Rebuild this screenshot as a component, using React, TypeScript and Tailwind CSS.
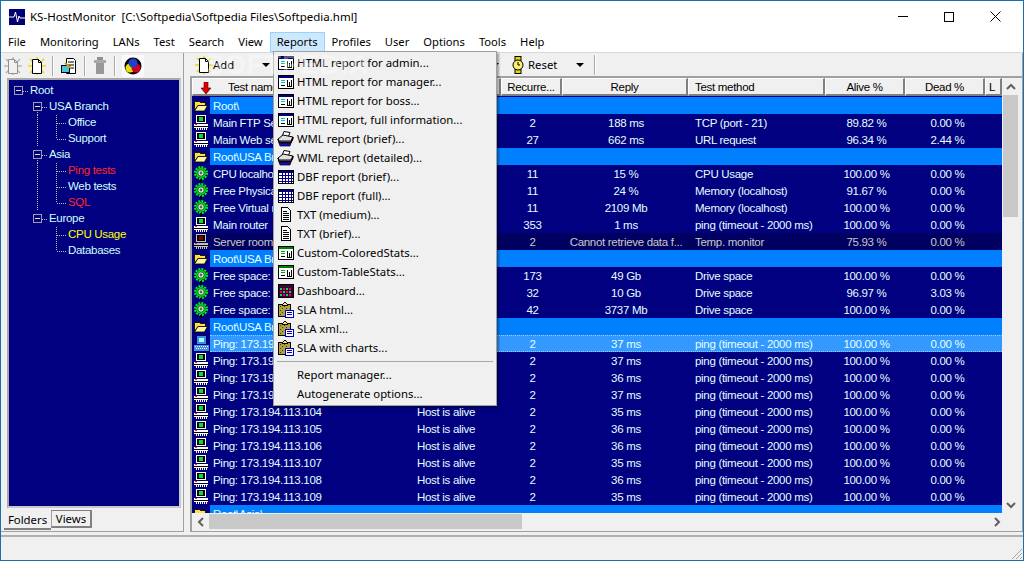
import React from 'react';

const UI = "font-['Noto_Sans',sans-serif] text-[11.35px]";
const GRID = "font-['Liberation_Sans',sans-serif] text-[11.5px] tracking-[-0.3px]";

type RowKind = 'folder' | 'pc' | 'gear' | 'bad' | 'sel';

interface Row {
  kind: RowKind;
  name: string;
  status?: string;
  rec?: string;
  reply?: string;
  method?: string;
  alive?: string;
  dead?: string;
}

const PING = 'ping (timeout - 2000 ms)';

const ping = (n: number, ms: number, kind: RowKind = 'pc'): Row => ({
  kind,
  name: `Ping: 173.194.113.${n}`,
  status: 'Host is alive',
  rec: '2',
  reply: `${ms} ms`,
  method: PING,
  alive: '100.00 %',
  dead: '0.00 %',
});

const rows: Row[] = [
  { kind: 'folder', name: 'Root\\' },
  { kind: 'pc', name: 'Main FTP Server', status: 'Host is alive', rec: '2', reply: '188 ms', method: 'TCP (port - 21)', alive: '89.82 %', dead: '0.00 %' },
  { kind: 'pc', name: 'Main Web server', status: 'Host is alive', rec: '27', reply: '662 ms', method: 'URL request', alive: '96.34 %', dead: '2.44 %' },
  { kind: 'folder', name: 'Root\\USA Branch\\' },
  { kind: 'gear', name: 'CPU localhost', status: 'Normal', rec: '11', reply: '15 %', method: 'CPU Usage', alive: '100.00 %', dead: '0.00 %' },
  { kind: 'gear', name: 'Free Physical memory', status: 'Normal', rec: '11', reply: '24 %', method: 'Memory (localhost)', alive: '91.67 %', dead: '0.00 %' },
  { kind: 'gear', name: 'Free Virtual memory', status: 'Normal', rec: '11', reply: '2109 Mb', method: 'Memory (localhost)', alive: '100.00 %', dead: '0.00 %' },
  { kind: 'pc', name: 'Main router', status: 'Host is alive', rec: '353', reply: '1 ms', method: PING, alive: '100.00 %', dead: '0.00 %' },
  { kind: 'bad', name: 'Server room: temperature', status: 'Unknown', rec: '2', reply: 'Cannot retrieve data f...', method: 'Temp. monitor', alive: '75.93 %', dead: '0.00 %' },
  { kind: 'folder', name: 'Root\\USA Branch\\Office' },
  { kind: 'gear', name: 'Free space: C', status: 'Normal', rec: '173', reply: '49 Gb', method: 'Drive space', alive: '100.00 %', dead: '0.00 %' },
  { kind: 'gear', name: 'Free space: D', status: 'Normal', rec: '32', reply: '10 Gb', method: 'Drive space', alive: '96.97 %', dead: '3.03 %' },
  { kind: 'gear', name: 'Free space: E', status: 'Normal', rec: '42', reply: '3737 Mb', method: 'Drive space', alive: '100.00 %', dead: '0.00 %' },
  { kind: 'folder', name: 'Root\\USA Branch\\Support' },
  ping(100, 37, 'sel'),
  ping(101, 37),
  ping(102, 36),
  ping(103, 37),
  ping(104, 35),
  ping(105, 36),
  ping(106, 36),
  ping(107, 35),
  ping(108, 36),
  ping(109, 35),
  { kind: 'folder', name: 'Root\\Asia\\' },
];

const FolderIcon = () => (
  <svg width="14" height="12" viewBox="0 0 14 12">
    <path d="M0.5 1.5h5l1 1h5v3H4l-3.5 5z" fill="#ffe040" stroke="#000" strokeWidth="0.8" />
    <path d="M4 5.5h9.5l-3 5.5H0.5z" fill="#fff8a0" stroke="#000" strokeWidth="0.8" />
  </svg>
);

const PcIcon = ({ screen = '#00e040', body = '#ffffff' }: { screen?: string; body?: string }) => (
  <svg width="14" height="15" viewBox="0 0 14 15" shapeRendering="crispEdges">
    <rect x="2" y="0" width="10" height="8" fill={body} />
    <rect x="3" y="1" width="8" height="6" fill="#000" />
    <rect x="5" y="2" width="4" height="4" fill={screen} />
    <rect x="5" y="8" width="4" height="1" fill="#000" />
    <rect x="0" y="9" width="14" height="2" fill={body} />
    <rect x="1" y="9" width="2" height="1" fill="#ff2020" />
    <rect x="0" y="11" width="14" height="1" fill="#000" />
    <rect x="0" y="12" width="14" height="1" fill={body} />
    <path d="M2 13h1v2H2zM4 13h1v2H4zM6 13h1v2H6zM8 13h1v2H8zM10 13h1v2h-1zM12 13h1v2h-1z" fill={body} />
  </svg>
);

const SelIcon = () => (
  <svg width="15" height="16" viewBox="0 0 15 16" shapeRendering="crispEdges">
    <rect x="3" y="0" width="9" height="8" fill="#3f8fe0" />
    <rect x="5" y="2" width="5" height="4" fill="#a0ffff" />
    <rect x="0" y="9" width="15" height="6" fill="#3f8fe0" />
    <path d="M1 10h1v1H1zM3 10h1v1H3zM5 10h1v1H5zM7 10h1v1H7zM9 10h1v1H9zM11 10h1v1h-1zM13 10h1v1h-1zM2 12h1v1H2zM4 12h1v1H4zM6 12h1v1H6zM8 12h1v1H8zM10 12h1v1h-1zM12 12h1v1h-1z" fill="#ffffff" />
  </svg>
);

const GearIcon = () => (
  <svg width="16" height="16" viewBox="0 0 16 16">
    <circle cx="8" cy="7" r="6" fill="none" stroke="#00f010" strokeWidth="2" strokeDasharray="2 1.1" />
    <circle cx="8" cy="7" r="5" fill="#00e010" />
    <circle cx="8" cy="7" r="3.2" fill="#e8e8e8" stroke="#004000" strokeWidth="0.8" />
    <circle cx="8" cy="7" r="1.4" fill="#308030" />
    <rect x="7" y="13" width="2" height="3" fill="#000" />
  </svg>
);

const Win = ({ bar = '#000080', body = '#fff', a = '#00c0c0', b = '#000' }: { bar?: string; body?: string; a?: string; b?: string }) => (
  <svg width="16" height="14" viewBox="0 0 16 14" shapeRendering="crispEdges">
    <rect x="0.5" y="0.5" width="15" height="13" fill={body} stroke="#000" />
    <rect x="1" y="1" width="14" height="2" fill={bar} />
    <rect x="3" y="5" width="4" height="1" fill={a} />
    <rect x="3" y="7" width="4" height="1" fill={a} />
    <rect x="3" y="10" width="4" height="1" fill={b} />
    <path d="M9 5h1v6H9zM11 7h1v4h-1zM13 5h1v6h-1zM9 11h5v1H9z" fill={b} />
  </svg>
);

const TableIcon = () => (
  <svg width="16" height="14" viewBox="0 0 16 14" shapeRendering="crispEdges">
    <rect x="0.5" y="0.5" width="15" height="13" fill="#fff" stroke="#000" />
    <rect x="1" y="1" width="14" height="2" fill="#000080" />
    <path d="M1 5h14v1H1zM1 8h14v1H1zM1 11h14v1H1zM4 3h1v10H4zM7 3h1v10H7zM10 3h1v10h-1zM13 3h1v10h-1z" fill="#000080" />
  </svg>
);

const DocIcon = () => (
  <svg width="12" height="15" viewBox="0 0 12 15" shapeRendering="crispEdges">
    <path d="M1.5 0.5h6l3 3v11h-9z" fill="#fff" stroke="#000" />
    <path d="M3 4h4v1H3zM3 6h6v1H3zM3 8h6v1H3zM3 10h6v1H3zM3 12h6v1H3z" fill="#000" />
  </svg>
);

const PrinterIcon = () => (
  <svg width="17" height="16" viewBox="0 0 17 16">
    <path d="M7 0.5l6 1-2 5-6-1z" fill="#fff" stroke="#000" />
    <path d="M1 8l5-4 10 2-2 4H2z" fill="#e0e0e0" stroke="#000" />
    <path d="M1 8l1 3h12l2-5v2l-2 4H2z" fill="#b00020" stroke="#000" />
    <path d="M2 12h12l-1 3H3z" fill="#1010c0" stroke="#000" strokeWidth="0.7" />
  </svg>
);

const DashIcon = () => (
  <svg width="16" height="14" viewBox="0 0 16 14" shapeRendering="crispEdges">
    <rect x="0.5" y="0.5" width="15" height="13" fill="#400040" stroke="#000" />
    <rect x="1" y="1" width="14" height="2" fill="#301030" />
    <path d="M2 4h2v2H2zM8 4h2v2H8zM5 7h2v2H5zM11 7h2v2h-2zM2 10h2v2H2zM8 10h2v2H8z" fill="#00e040" />
    <path d="M5 4h2v2H5zM11 4h2v2h-2zM2 7h2v2H2zM8 7h2v2H8zM5 10h2v2H5zM11 10h2v2h-2z" fill="#e00060" />
  </svg>
);

const ClipIcon = () => (
  <svg width="16" height="16" viewBox="0 0 16 16" shapeRendering="crispEdges">
    <rect x="0.5" y="2.5" width="12" height="12" fill="#b0a040" stroke="#000" />
    <path d="M2 4h1v1H2zM4 6h1v1H4zM6 4h1v1H6zM2 8h1v1H2zM8 6h1v1H8zM4 10h1v1H4zM2 12h1v1H2z" fill="#403810" />
    <path d="M4.5 2.5l2-2h1l2 2v1h-5z" fill="#ffe860" stroke="#000" />
    <rect x="7.5" y="8.5" width="8" height="7" fill="#fff" stroke="#0000c0" />
    <path d="M9 10h5v1H9zM9 12h5v1H9z" fill="#0000c0" />
  </svg>
);

const StarDoc = ({ faded = false }: { faded?: boolean }) => (
  <svg width="18" height="18" viewBox="0 0 18 18" className="shrink-0">
    <path
      d="M9 0V18M0 9H18M2 2L16 16M16 2L2 16"
      stroke={faded ? '#b8b8b0' : '#f0d800'}
      strokeWidth="1.6"
    />
    <path d="M4.5 2.5h6l3 3v11h-9z" fill={faded ? '#f0f0f0' : '#fff'} stroke={faded ? '#909090' : '#000'} />
    <path d="M10.5 2.5v3h3" fill="none" stroke={faded ? '#909090' : '#000'} />
  </svg>
);

const Caret = () => (
  <svg width="8" height="4" viewBox="0 0 8 4" className="shrink-0"><path d="M0 0h8L4 4z" fill="#000" /></svg>
);

const Sep = () => <div className="w-[2px] h-[20px] shrink-0 bg-[#a8a8a8] border-r border-white" />;

const WatchIcon = () => (
  <svg width="12" height="18" viewBox="0 0 12 18" className="shrink-0">
    <rect x="3" y="0.5" width="6" height="4" fill="#e8d800" stroke="#000" />
    <rect x="3" y="13.5" width="6" height="4" fill="#e8d800" stroke="#000" />
    <circle cx="6" cy="9" r="5" fill="#f8f070" stroke="#000" />
    <path d="M6 6v3h2" fill="none" stroke="#000" />
  </svg>
);

// 0 empty, 1 straight guide, 2 branch with end, 3 branch going on, 4 expanded box
const TreeCell = ({ t, down }: { t: number; down?: boolean }) => (
  <svg width="19" height="16" viewBox="0 0 19 16" className="shrink-0" shapeRendering="crispEdges">
    {t === 1 && <path d="M9.5 0V16" stroke="#c0c0a0" strokeDasharray="1 1" />}
    {t === 2 && <path d="M9.5 0V8H19" fill="none" stroke="#c0c0a0" strokeDasharray="1 1" />}
    {t === 3 && <path d="M9.5 0V16M9.5 8H19" fill="none" stroke="#c0c0a0" strokeDasharray="1 1" />}
    {t === 4 && (
      <>
        {down && <path d="M9.5 13V16" stroke="#c0c0a0" strokeDasharray="1 1" />}
        <path d="M14 8H19" stroke="#c0c0a0" strokeDasharray="1 1" />
        <rect x="5.5" y="3.5" width="8" height="8" fill="#000080" stroke="#a0a0a0" />
        <path d="M7 7.5H12" stroke="#e0e0e0" />
      </>
    )}
  </svg>
);

const tree: { cells: [number, boolean?][]; label: string; color: string }[] = [
  { cells: [[4]], label: 'Root', color: 'text-[#d0ffff]' },
  { cells: [[0], [4, true]], label: 'USA Branch', color: 'text-[#d0ffff]' },
  { cells: [[0], [1], [3]], label: 'Office', color: 'text-[#d0ffff]' },
  { cells: [[0], [1], [2]], label: 'Support', color: 'text-[#d0ffff]' },
  { cells: [[0], [4, true]], label: 'Asia', color: 'text-[#d0ffff]' },
  { cells: [[0], [1], [3]], label: 'Ping tests', color: 'text-[#ff2828]' },
  { cells: [[0], [1], [3]], label: 'Web tests', color: 'text-[#d0ffff]' },
  { cells: [[0], [1], [2]], label: 'SQL', color: 'text-[#ff2828]' },
  { cells: [[0], [4]], label: 'Europe', color: 'text-[#d0ffff]' },
  { cells: [[0], [0], [3]], label: 'CPU Usage', color: 'text-[#ffff00]' },
  { cells: [[0], [0], [2]], label: 'Databases', color: 'text-[#d0ffff]' },
];

const menuItems: { icon: React.ReactNode; label: string }[] = [
  { icon: <Win />, label: 'HTML report for admin...' },
  { icon: <Win />, label: 'HTML report for manager...' },
  { icon: <Win />, label: 'HTML report for boss...' },
  { icon: <Win />, label: 'HTML report, full information...' },
  { icon: <PrinterIcon />, label: 'WML report (brief)...' },
  { icon: <PrinterIcon />, label: 'WML report (detailed)...' },
  { icon: <TableIcon />, label: 'DBF report (brief)...' },
  { icon: <TableIcon />, label: 'DBF report (full)...' },
  { icon: <DocIcon />, label: 'TXT (medium)...' },
  { icon: <DocIcon />, label: 'TXT (brief)...' },
  { icon: <Win bar="#008000" a="#00a000" />, label: 'Custom-ColoredStats...' },
  { icon: <Win bar="#008000" a="#00a000" />, label: 'Custom-TableStats...' },
  { icon: <DashIcon />, label: 'Dashboard...' },
  { icon: <ClipIcon />, label: 'SLA html...' },
  { icon: <ClipIcon />, label: 'SLA xml...' },
  { icon: <ClipIcon />, label: 'SLA with charts...' },
];

const HeadCell = ({ className, children }: { className: string; children?: React.ReactNode }) => (
  <div className={`h-[18px] shrink-0 pt-[2px] bg-[#f0f0f0] border-t border-l border-white border-r-2 border-b-2 border-r-[#808080] border-b-[#808080] flex items-center overflow-hidden whitespace-nowrap ${className}`}>
    {children}
  </div>
);

const GridRow = ({ row }: { row: Row }) => {
  const isFolder = row.kind === 'folder';
  const rowBg = row.kind === 'bad' ? 'bg-[#000060]' : '';
  const fill = isFolder ? 'bg-[#0080ff]' : row.kind === 'sel' ? 'bg-[#3399ff] border-y border-dotted border-[#a0c8f0]' : '';
  const text = row.kind === 'bad' ? 'text-[#c8c8c8]' : 'text-[#e4ffff]';
  return (
    <div className={`flex h-[17px] shrink-0 items-center ${text} ${rowBg}`}>
      <div className="w-[18px] shrink-0 h-full flex items-center justify-center">
        {isFolder && <FolderIcon />}
        {row.kind === 'pc' && <PcIcon />}
        {row.kind === 'gear' && <GearIcon />}
        {row.kind === 'bad' && <PcIcon screen="#800000" body="#c0c0c0" />}
        {row.kind === 'sel' && <SelIcon />}
      </div>
      <div className={`flex-1 h-full pt-[2px] flex items-center overflow-hidden whitespace-nowrap ${fill}`}>
        <div className="w-[205px] pl-[3px] shrink-0 overflow-hidden">{row.name}</div>
        <div className="w-[87px] pl-[2px] shrink-0 overflow-hidden">{row.status}</div>
        <div className="w-[61px] shrink-0 text-center">{row.rec}</div>
        <div className="w-[126px] shrink-0 text-center overflow-hidden">{row.reply}</div>
        <div className="w-[137px] pl-[6px] shrink-0 overflow-hidden">{row.method}</div>
        <div className="w-[81px] shrink-0 text-center">{row.alive}</div>
        <div className="w-[81px] shrink-0 text-center">{row.dead}</div>
      </div>
    </div>
  );
};

const Chevron = ({ d }: { d: string }) => (
  <svg width="10" height="10" viewBox="0 0 10 10"><path d={d} fill="none" stroke="#606060" strokeWidth="2" /></svg>
);

const App: React.FC = () => {
  return (
    <div className={`relative w-[1024px] h-[561px] overflow-hidden flex flex-col bg-[#f0f0f0] border border-[#1a6fa8] text-black leading-none ${UI}`}>
      {/* Title bar */}
      <div className="h-[31px] shrink-0 bg-white flex items-center pl-[8px]">
        <svg width="16" height="16" viewBox="0 0 16 16" className="shrink-0">
          <rect width="16" height="16" fill="#000070" />
          <path d="M0 8h5l1.5-5 2 10 1.5-6 1 2h5" fill="none" stroke="#fff" strokeWidth="1" />
        </svg>
        <span className="ml-[5px] whitespace-pre text-[11.5px]">KS-HostMonitor  [C:\Softpedia\Softpedia Files\Softpedia.hml]</span>
        <div className="ml-auto flex items-center">
          <div className="w-[46px] flex justify-center"><div className="w-[10px] h-px bg-black" /></div>
          <div className="w-[46px] flex justify-center"><div className="w-[10px] h-[10px] border border-black" /></div>
          <div className="w-[46px] flex justify-center">
            <svg width="11" height="11" viewBox="0 0 11 11"><path d="M0.5 0.5l10 10M10.5 0.5l-10 10" stroke="#000" /></svg>
          </div>
          <div className="w-[5px]" />
        </div>
      </div>

      {/* Menu bar */}
      <div className="h-[20px] shrink-0 bg-white flex items-center text-[11.2px]">
        {['File', 'Monitoring', 'LANs', 'Test', 'Search', 'View', 'Reports', 'Profiles', 'User', 'Options', 'Tools', 'Help'].map((m) => (
          <div
            key={m}
            className={`h-full flex items-center ${m === 'Reports' ? 'bg-[#cce8ff] border border-[#99d1ff] px-[6px]' : 'px-[7px]'}`}
          >
            {m}
          </div>
        ))}
      </div>

      {/* Body */}
      <div className="flex-1 flex min-h-0 gap-[6px] border-t border-[#d8d8d8]">
        {/* Left pane */}
        <div className="w-[183px] shrink-0 flex flex-col border-r border-b border-[#a0a0a0]">
          <div className="h-[25px] shrink-0 flex items-center pl-[3px] gap-[6px]">
            <StarDoc faded />
            <StarDoc />
            <Sep />
            <svg width="18" height="18" viewBox="0 0 18 18" className="shrink-0">
              <path d="M6.5 1.5h7l2 2v13h-9z" fill="#fff" stroke="#000" />
              <path d="M8 5h6M8 8h6M8 11h6" stroke="#000" />
              <rect x="1.5" y="8.5" width="8" height="7" fill="#50c0e0" stroke="#000" />
              <path d="M5 6l6 5" stroke="#d8a000" strokeWidth="2" />
            </svg>
            <Sep />
            <svg width="16" height="18" viewBox="0 0 16 18" className="shrink-0">
              <rect x="5" y="0" width="6" height="3" fill="#909090" />
              <rect x="2" y="3" width="12" height="3" fill="#a8a8a8" />
              <rect x="4" y="6" width="8" height="11" fill="#989898" />
            </svg>
            <Sep />
            <div className="w-[22px] h-[22px] shrink-0 bg-white/70 flex items-center justify-center">
              <svg width="18" height="18" viewBox="0 0 18 18">
                <circle cx="9" cy="9" r="8.5" fill="#000" />
                <circle cx="6" cy="11" r="4.5" fill="#e8e000" />
                <circle cx="12" cy="11" r="4.5" fill="#d00020" />
                <circle cx="9" cy="6" r="4.5" fill="#2040d0" />
              </svg>
            </div>
          </div>
          <div className="flex-1 min-h-0 ml-[6px] mr-[2px] border-2 border-[#a8a8a8] border-r-[#c8c8c8] border-b-[#c8c8c8]">
            <div className={`h-full bg-[#000080] pt-[3px] ${GRID}`}>
              {tree.map((n) => (
                <div key={n.label} className="flex h-4 items-center whitespace-nowrap">
                  {n.cells.map((c, i) => <TreeCell key={i} t={c[0]} down={c[1]} />)}
                  <span className={`ml-[2px] ${n.color}`}>{n.label}</span>
                </div>
              ))}
            </div>
          </div>
          <div className="h-[23px] shrink-0 flex items-start pl-[3px] pt-[2px]">
            <div className="w-[47px] h-[20px] pt-[2px] flex items-center justify-center bg-[#f0f0f0] border-b-2 border-[#808080]">Folders</div>
            <div className="w-[41px] h-[18px] flex items-center justify-center bg-[#f0f0f0] border-t border-t-[#808080] border-l border-l-[#a0a0a0] border-r-2 border-r-[#808080] border-b-2 border-b-[#808080]">Views</div>
          </div>
        </div>

        {/* Right pane */}
        <div className="flex-1 min-w-0 flex flex-col border-b border-r border-[#a0a0a0]">
          <div className="h-[23px] shrink-0 flex items-center pl-[5px]">
            <StarDoc />
            <span className="w-[21px]">Add</span>
            <div className="ml-[28px]"><Caret /></div>
            <div className="w-[221px] shrink-0" />
            <Caret />
            <div className="ml-[13px]"><WatchIcon /></div>
            <span className="ml-[4px] w-[29px]">Reset</span>
            <div className="ml-[19px]"><Caret /></div>
            <div className="ml-[10px]"><Sep /></div>
          </div>
          <div className={`flex-1 min-h-0 flex flex-col border-l-2 border-t-2 border-[#a0a0a0] ${GRID}`}>
            <div className="flex flex-1 min-h-0">
              <div className="w-[810px] shrink-0 flex flex-col min-h-0">
                <div className="flex shrink-0">
                  <HeadCell className="w-[221px] pl-[8px]">
                    <svg width="10" height="12" viewBox="0 0 10 12" className="shrink-0">
                      <path d="M3 0h4v6h3l-5 6-5-6h3z" fill="#e00000" stroke="#400000" strokeWidth="0.6" />
                    </svg>
                    <span className="ml-[17px]">Test name</span>
                  </HeadCell>
                  <HeadCell className="w-[88px] justify-center">Status</HeadCell>
                  <HeadCell className="w-[61px] justify-center">Recurre...</HeadCell>
                  <HeadCell className="w-[126px] justify-center">Reply</HeadCell>
                  <HeadCell className="w-[137px] pl-[6px]">Test method</HeadCell>
                  <HeadCell className="w-[80px] justify-center">Alive %</HeadCell>
                  <HeadCell className="w-[80px] justify-center">Dead %</HeadCell>
                  <HeadCell className="w-[17px] pl-[3px]">L</HeadCell>
                </div>
                <div className="flex-1 min-h-0 overflow-hidden bg-[#000080] pt-[1px]">
                  {rows.map((r, i) => <GridRow key={i} row={r} />)}
                </div>
              </div>
              <div className="w-[17px] shrink-0 flex flex-col bg-[#f0f0f0]">
                <div className="h-[17px] shrink-0 flex items-center justify-center"><Chevron d="M1 7l4-4 4 4" /></div>
                <div className="h-[122px] shrink-0 mx-[1px] bg-[#c8c8c8]" />
                <div className="flex-1" />
                <div className="h-[17px] shrink-0 flex items-center justify-center"><Chevron d="M1 3l4 4 4-4" /></div>
              </div>
            </div>
            <div className="h-[17px] shrink-0 flex bg-[#f0f0f0] mb-[1px]">
              <div className="w-[17px] shrink-0 flex items-center justify-center"><Chevron d="M7 1l-4 4 4 4" /></div>
              <div className="w-[313px] shrink-0 my-[1px] bg-[#c8c8c8]" />
              <div className="flex-1" />
              <div className="w-[17px] shrink-0 flex items-center justify-center mr-[17px]"><Chevron d="M3 1l4 4-4 4" /></div>
            </div>
          </div>
        </div>
      </div>

      {/* Status bar */}
      <div className="h-[25px] shrink-0 mt-[3px] border-t-2 border-[#b0b0b0] flex justify-end items-end">
        <svg width="13" height="13" viewBox="0 0 13 13"><path d="M12 2L2 12M12 6L6 12M12 10L10 12" stroke="#a8a8a8" /></svg>
      </div>

      {/* Reports dropdown, open over the toolbar and grid */}
      <div className="absolute left-[272px] top-[50px] w-[224px] h-[355px] pt-[1px] bg-[#f0f0f0] border border-[#a0a0a0] shadow-[2px_2px_2px_rgba(0,0,0,0.35)] z-10">
        {menuItems.map((item) => (
          <div key={item.label} className="h-[19px] flex items-center whitespace-nowrap">
            <div className="w-[23px] shrink-0 flex justify-center">{item.icon}</div>
            <span>{item.label}</span>
          </div>
        ))}
        <div className="h-px bg-[#a8a8a8] mx-[3px] mt-[4px] mb-[3px]" />
        <div className="h-[19px] flex items-center pl-[23px]">Report manager...</div>
        <div className="h-[19px] flex items-center pl-[23px]">Autogenerate options...</div>
      </div>

      {/* Faint watermark across the toolbar */}
      <div className="absolute left-[205px] top-[51px] z-20 pointer-events-none font-['Liberation_Sans',sans-serif] font-bold text-[27px] leading-[26px] tracking-[1px] text-white/35">SOFTPEDIA</div>
    </div>
  );
};

export default App;
